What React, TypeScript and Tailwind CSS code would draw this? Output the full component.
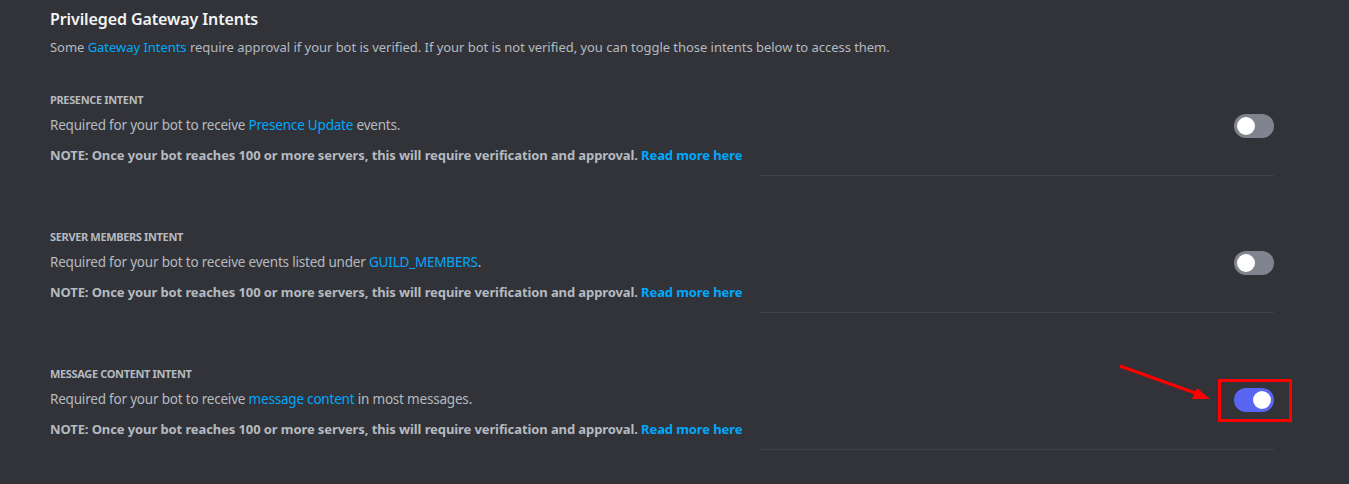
import React from "react";

function Toggle({ on }: { on: boolean }) {
  return (
    <div
      className={
        "relative w-[40px] h-[24px] rounded-full shrink-0 " +
        (on ? "bg-[#5865f2]" : "bg-[#80848e]")
      }
    >
      <div
        className={
          "absolute top-[3px] w-[18px] h-[18px] rounded-full bg-white " +
          (on ? "left-[19px]" : "left-[3px]")
        }
      />
    </div>
  );
}

function Section({
  label,
  desc,
  on,
  first,
}: {
  label: string;
  desc: React.ReactNode;
  on: boolean;
  first?: boolean;
}) {
  return (
    <div className={first ? "mt-[35px]" : "mt-[53px]"}>
      <div className="flex items-start justify-between">
        <div className="flex flex-col">
          <div className="text-[11px] leading-[16px] font-bold uppercase text-[#b5bac1] tracking-[-0.35px]">
            {label}
          </div>
          <div className="mt-[7px] text-[13.5px] leading-[20px] text-[#b5bac1] tracking-[-0.2px]">
            {desc}
          </div>
          <div className="mt-[10px] text-[13px] leading-[20px] font-bold text-[#b5bac1] tracking-[-0.1px]">
            NOTE: Once your bot reaches 100 or more servers, this will require verification and approval.{" "}
            <span className="text-[#00a8fc]">Read more here</span>
          </div>
        </div>
        <div className="mt-[22px]">
          <Toggle on={on} />
        </div>
      </div>
      <div className="flex justify-end mt-[10px]">
        <div className="w-[514px] h-px bg-[#3f4147]" />
      </div>
    </div>
  );
}

export default function App() {
  return (
    <div
      className="relative w-[1349px] h-[484px] bg-[#313338] overflow-hidden"
      style={{ fontFamily: '"Noto Sans", "Open Sans", sans-serif' }}
    >
      <div className="pl-[50px] pr-[75px] pt-[9px]">
        <div className="text-[16px] leading-[20px] font-semibold text-[#f2f3f5] tracking-[-0.1px]">
          Privileged Gateway Intents
        </div>
        <div className="mt-[8px] text-[13px] leading-[20px] text-[#b5bac1] tracking-[-0.04px]">
          Some <span className="text-[#00a8fc]">Gateway Intents</span> require approval if your bot is verified. If your bot is not verified, you can toggle those intents below to access them.
        </div>
        <Section
          first
          label="Presence Intent"
          on={false}
          desc={
            <>
              Required for your bot to receive{" "}
              <span className="text-[#00a8fc]">Presence Update</span> events.
            </>
          }
        />
        <Section
          label="Server Members Intent"
          on={false}
          desc={
            <>
              Required for your bot to receive events listed under{" "}
              <span className="text-[#00a8fc]">GUILD_MEMBERS</span>.
            </>
          }
        />
        <Section
          label="Message Content Intent"
          on={true}
          desc={
            <>
              Required for your bot to receive{" "}
              <span className="text-[#00a8fc]">message content</span> in most messages.
            </>
          }
        />
      </div>
      {/* annotation */}
      <div className="absolute left-[1218px] top-[379px] w-[74px] h-[43px] border-[3px] border-[#ff0000]" />
      <svg
        className="absolute left-0 top-0 pointer-events-none"
        width="1349"
        height="484"
      >
        <line x1="1120" y1="366" x2="1198" y2="394" stroke="#ff0000" strokeWidth="3" />
        <polygon points="1210,399 1192,399 1197,388" fill="#ff0000" />
      </svg>
    </div>
  );
}
